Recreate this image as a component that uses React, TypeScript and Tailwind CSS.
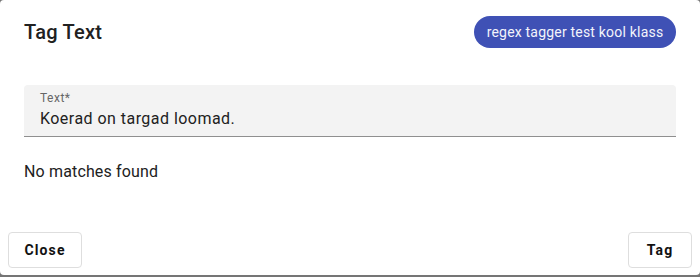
export default function App() {
  return (
    <div className="h-[277px] w-[700px] bg-[#757575] font-['Roboto','Liberation_Sans',sans-serif]">
      <div className="flex h-[275px] flex-col rounded-[4px] bg-white">
        <header className="flex items-center justify-between px-6 pt-4">
          <h2 className="text-[20px] leading-8 font-medium tracking-[0.25px] text-[#212121]">Tag Text</h2>
          <span className="flex h-8 w-[202px] items-center justify-center rounded-full bg-[#3f51b5] text-[14px] tracking-[0.2px] text-[#f3f4fb]">
            regex tagger test kool klass
          </span>
        </header>

        <div className="px-6">
          <div className="mt-[37px] h-[52px] rounded-t-[4px] border-b border-[#8f8f8f] bg-[#f3f3f3] px-4 pt-[7px]">
            <p className="text-[12px] leading-[12px] tracking-[0.5px] text-[#666]">Text*</p>
            <p className="mt-[3px] text-[16px] leading-[23px] tracking-[0.46px] text-[#212121]">
              Koerad on targad loomad.
            </p>
          </div>
          <p className="mt-[23px] text-[16px] leading-6 tracking-[0.15px] text-[#212121]">No matches found</p>
        </div>

        <div className="mt-auto flex justify-between px-2 pb-[7px]">
          <button className="h-9 w-[74px] rounded-[4px] border border-[#dedede] text-[14px] font-bold tracking-[0.08em] text-[#111]">
            Close
          </button>
          <button className="h-9 w-16 rounded-[4px] border border-[#dedede] text-[14px] font-bold tracking-[0.08em] text-[#111]">
            Tag
          </button>
        </div>
      </div>
    </div>
  )
}
